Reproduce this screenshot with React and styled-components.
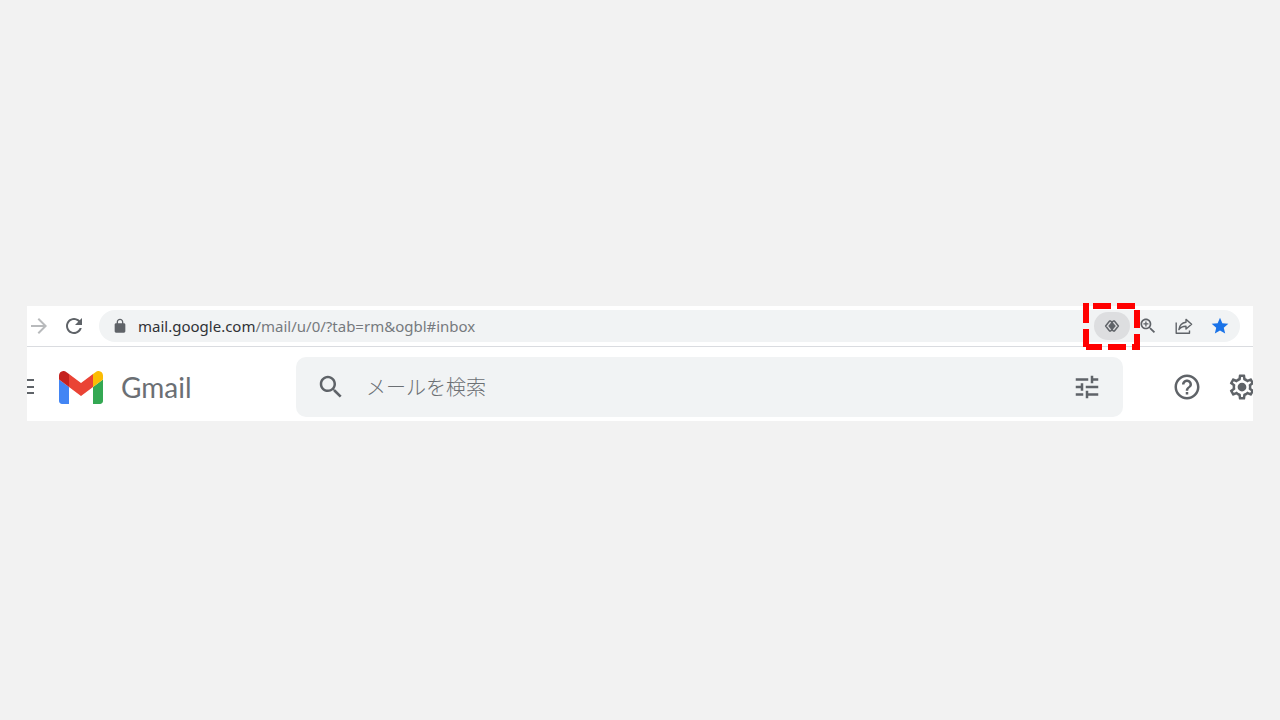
import React from 'react';
import styled, { createGlobalStyle } from 'styled-components';

const GlobalStyle = createGlobalStyle`
  * {
    box-sizing: border-box;
  }

  body {
    margin: 0;
    background: #f2f2f2;
    font-family: 'Noto Sans', 'Noto Sans CJK JP', sans-serif;
  }
`;

const Page = styled.main`
  display: flex;
  flex-direction: column;
  justify-content: center;
  min-height: 100vh;
  padding: 7px 27px 0;
`;

const Window = styled.section`
  background: #fff;
`;

const Toolbar = styled.header`
  display: flex;
  align-items: center;
  height: 41px;
  padding: 0 13px 0 2px;
  border-bottom: 1px solid #dadce0;
`;

const IconButton = styled.button`
  display: flex;
  flex: none;
  align-items: center;
  justify-content: center;
  width: ${props => props.$width || 36}px;
  height: 28px;
  padding: 0;
  border: 0;
  border-radius: 14px;
  background: ${props => (props.$active ? '#dddee0' : 'transparent')};
  color: ${props => props.$color || '#5f6368'};
`;

const Icon = styled.svg`
  display: block;
  flex: none;
  width: ${props => props.$size}px;
  height: ${props => props.$size}px;
  fill: currentColor;
`;

const AddressBar = styled.div`
  display: flex;
  flex: 1;
  align-items: center;
  min-width: 0;
  height: 32px;
  padding: 0 2px 0 13px;
  border-radius: 16px;
  background: #f1f3f4;
  color: #5f6368;
`;

const Url = styled.div`
  flex: 1;
  min-width: 0;
  margin-left: 10px;
  overflow: hidden;
  color: #767a7e;
  font-size: 15px;
  line-height: 24px;
  white-space: nowrap;
  outline: none;
`;

const Host = styled.span`
  color: #303236;
`;

const Highlighted = styled.div`
  position: relative;
`;

const DashedFrame = styled.svg`
  position: absolute;
  top: -9px;
  left: -11px;
  width: 57px;
  height: 47px;
  fill: none;
  stroke: #ff0000;
  stroke-width: 6;
  pointer-events: none;
`;

const AppBar = styled.div`
  display: flex;
  align-items: center;
  height: 74px;
  padding-top: 6px;
  overflow: hidden;
`;

const MenuButton = styled(IconButton)`
  justify-content: flex-end;
`;

const Brand = styled.a`
  display: flex;
  flex: none;
  align-items: center;
  width: 237px;
  margin-left: 25px;
  gap: 18px;
  color: #6b6f74;
  font-family: Lato, sans-serif;
  font-size: 28px;
  line-height: 36px;
  text-decoration: none;
`;

const Logo = styled.svg`
  display: block;
  width: 44px;
  height: 33px;
`;

const Search = styled.form`
  display: flex;
  flex: 1;
  align-items: center;
  min-width: 0;
  height: 60px;
  padding: 0 18px;
  border-radius: 10px;
  background: #f1f3f4;
`;

const SearchInput = styled.input`
  flex: 1;
  min-width: 0;
  margin-left: 18px;
  padding: 0;
  border: 0;
  outline: none;
  background: transparent;
  color: #5f6368;
  font-family: 'Noto Sans CJK JP', sans-serif;
  font-size: 20px;
  font-weight: 300;
  line-height: 30px;

  &::placeholder {
    color: #6b6f73;
    opacity: 1;
  }
`;

const Actions = styled.div`
  display: flex;
  flex: none;
  width: 130px;
  padding-left: 49px;
  gap: 24px;
  overflow: hidden;
`;

const icons = {
  forward: 'M12 4l-1.41 1.41L16.17 11H4v2h12.17l-5.58 5.59L12 20l8-8z',
  reload:
    'M17.65 6.35C16.2 4.9 14.21 4 12 4c-4.42 0-7.99 3.58-7.99 8s3.57 8 7.99 8c3.73 0 6.84-2.55 7.73-6h-2.08c-.82 2.33-3.04 4-5.65 4-3.31 0-6-2.69-6-6s2.69-6 6-6c1.66 0 3.14.69 4.22 1.78L13 11h7V4l-2.35 2.35z',
  lock:
    'M18 8h-1V6c0-2.76-2.24-5-5-5S7 3.24 7 6v2H6c-1.1 0-2 .9-2 2v10c0 1.1.9 2 2 2h12c1.1 0 2-.9 2-2V10c0-1.1-.9-2-2-2zM9 6c0-1.66 1.34-3 3-3s3 1.34 3 3v2H9V6z',
  star:
    'M12 17.27L18.18 21l-1.64-7.03L22 9.24l-7.19-.61L12 2 9.19 8.63 2 9.24l5.46 4.73L5.82 21z',
  search:
    'M15.5 14h-.79l-.28-.27C15.41 12.59 16 11.11 16 9.5 16 5.91 13.09 3 9.5 3S3 5.91 3 9.5 5.91 16 9.5 16c1.61 0 3.09-.59 4.23-1.57l.27.28v.79l5 4.99L20.49 19l-4.99-5zm-6 0C7.01 14 5 11.99 5 9.5S7.01 5 9.5 5 14 7.01 14 9.5 11.99 14 9.5 14z',
  zoom:
    'M15.5 14h-.79l-.28-.27C15.41 12.59 16 11.11 16 9.5 16 5.91 13.09 3 9.5 3S3 5.91 3 9.5 5.91 16 9.5 16c1.61 0 3.09-.59 4.23-1.57l.27.28v.79l5 4.99L20.49 19l-4.99-5zm-6 0C7.01 14 5 11.99 5 9.5S7.01 5 9.5 5 14 7.01 14 9.5 11.99 14 9.5 14zM8.7 6.5h1.6v2.2h2.2v1.6h-2.2v2.2H8.7v-2.2H6.5V8.7h2.2z',
  tune:
    'M3 17v2h6v-2H3zM3 5v2h10V5H3zm10 16v-2h8v-2h-8v-2h-2v6h2zM7 9v2H3v2h4v2h2V9H7zm14 4v-2H11v2h10zm-6-4h2V7h4V5h-4V3h-2v6z',
  help:
    'M11 18h2v-2h-2v2zm1-16C6.48 2 2 6.48 2 12s4.48 10 10 10 10-4.48 10-10S17.52 2 12 2zm0 18c-4.41 0-8-3.59-8-8s3.59-8 8-8 8 3.59 8 8-3.59 8-8 8zm0-14c-2.21 0-4 1.79-4 4h2c0-1.1.9-2 2-2s2 .9 2 2c0 2-3 1.75-3 5h2c0-2.25 3-2.5 3-5 0-2.21-1.79-4-4-4z',
  gear:
    'M19.43 12.98c.04-.32.07-.64.07-.98 0-.34-.03-.66-.07-.98l2.11-1.65c.19-.15.24-.42.12-.64l-2-3.46c-.09-.16-.26-.25-.44-.25-.06 0-.12.01-.17.03l-2.49 1c-.52-.4-1.08-.73-1.69-.98l-.38-2.65C14.46 2.18 14.25 2 14 2h-4c-.25 0-.46.18-.49.42l-.38 2.65c-.61.25-1.17.59-1.69.98l-2.49-1c-.06-.02-.12-.03-.18-.03-.17 0-.34.09-.43.25l-2 3.46c-.13.22-.07.49.12.64l2.11 1.65c-.04.32-.07.65-.07.98 0 .33.03.66.07.98l-2.11 1.65c-.19.15-.24.42-.12.64l2 3.46c.09.16.26.25.44.25.06 0 .12-.01.17-.03l2.49-1c.52.4 1.08.73 1.69.98l.38 2.65c.03.24.24.42.49.42h4c.25 0 .46-.18.49-.42l.38-2.65c.61-.25 1.17-.59 1.69-.98l2.49 1c.06.02.12.03.18.03.17 0 .34-.09.43-.25l2-3.46c.12-.22.07-.49-.12-.64l-2.11-1.65zm-1.98-1.71c.04.31.05.52.05.73 0 .21-.02.43-.05.73l-.14 1.13.89.7 1.08.84-.7 1.21-1.27-.51-1.04-.42-.9.68c-.43.32-.84.56-1.25.73l-1.06.43-.16 1.13-.2 1.35h-1.4l-.19-1.35-.16-1.13-1.06-.43c-.43-.18-.83-.41-1.23-.71l-.91-.7-1.06.43-1.27.51-.7-1.21 1.08-.84.89-.7-.14-1.13c-.03-.31-.05-.54-.05-.74s.02-.43.05-.73l.14-1.13-.89-.7-1.08-.84.7-1.21 1.27.51 1.04.42.9-.68c.43-.32.84-.56 1.25-.73l1.06-.43.16-1.13.2-1.35h1.39l.19 1.35.16 1.13 1.06.43c.43.18.83.41 1.23.71l.91.7 1.06-.43 1.27-.51.7 1.21-1.07.85-.89.7.14 1.13z',
};

const Glyph = ({ name, size, children }) => (
  <Icon $size={size} viewBox="0 0 24 24" aria-hidden="true">
    <path d={icons[name]} />
    {children}
  </Icon>
);

const HandlerIcon = () => (
  <Icon $size={16} viewBox="0 0 16 16" aria-hidden="true">
    <path
      d="M6.6 3H5.6L1.6 8l4 5h1L8 11.6 9.400 13h1l4-5-4-5h-1L8 4.400z"
      fill="none"
      stroke="currentColor"
      strokeWidth="1.5"
      strokeLinejoin="round"
    />
    <path d="M8 3.600L11.800 8 8 12.400 4.200 8z" />
  </Icon>
);

const ShareIcon = () => (
  <Icon $size={20} viewBox="0 0 20 20" aria-hidden="true">
    <path
      d="M2.2 6.5V17.2H15.5V14.5M12 3.4L17.6 8.2 12 13V10.2C8.6 10.2 6.4 11.3 4.9 13.6 5.4 9.8 7.7 6.7 12 6.2z"
      fill="none"
      stroke="currentColor"
      strokeWidth="1.4"
      strokeLinejoin="round"
    />
  </Icon>
);

const MenuIcon = () => (
  <Icon $size={16} viewBox="0 0 16 16" aria-hidden="true">
    <path d="M0 0h16v2H0zM0 7h16v2H0zM0 13h16v2H0z" />
  </Icon>
);

const GmailLogo = () => (
  <Logo viewBox="52 42 88 66" aria-hidden="true">
    <path fill="#4285f4" d="M58 108h14V74L52 59v43c0 3.32 2.69 6 6 6" />
    <path fill="#34a853" d="M120 108h14c3.32 0 6-2.69 6-6V59l-20 15" />
    <path fill="#fbbc04" d="M120 48v26l20-15v-8c0-7.42-8.47-11.65-14.4-7.2" />
    <path fill="#ea4335" d="M72 74V48l24 18 24-18v26L96 92" />
    <path fill="#c5221f" d="M52 51v8l20 15V48l-5.6-4.2c-5.94-4.45-14.4-.22-14.4 7.2" />
  </Logo>
);

const BrowserToolbar = () => (
  <Toolbar>
    <IconButton $width={20} $color="#b8babc" aria-label="進む">
      <Glyph name="forward" size={24} />
    </IconButton>
    <IconButton $width={50} aria-label="再読み込み">
      <Glyph name="reload" size={24} />
    </IconButton>
    <AddressBar>
      <Glyph name="lock" size={16} />
      <Url role="textbox" aria-label="アドレス" tabIndex={0}>
        <Host>mail.google.com</Host>/mail/u/0/?tab=rm&amp;ogbl#inbox
      </Url>
      <Highlighted>
        <IconButton $active aria-label="サービス ハンドラ">
          <HandlerIcon />
        </IconButton>
        <DashedFrame viewBox="0 0 57 47" aria-hidden="true">
          <path d="M10 3H28M34 3H52M54 7V25M54 31V47M54 44H49M43 44H25M19 44H3M3 44V26M3 20V0M0 3H4" />
        </DashedFrame>
      </Highlighted>
      <IconButton aria-label="ズーム">
        <Glyph name="zoom" size={20} />
      </IconButton>
      <IconButton aria-label="共有">
        <ShareIcon />
      </IconButton>
      <IconButton $color="#1a73e8" aria-label="ブックマーク">
        <Glyph name="star" size={20} />
      </IconButton>
    </AddressBar>
  </Toolbar>
);

const MailHeader = () => (
  <AppBar>
    <MenuButton $width={7} aria-label="メインメニュー">
      <MenuIcon />
    </MenuButton>
    <Brand href="#inbox">
      <GmailLogo />
      Gmail
    </Brand>
    <Search role="search" onSubmit={e => e.preventDefault()}>
      <IconButton $width={34} aria-label="検索">
        <Glyph name="search" size={30} />
      </IconButton>
      <SearchInput
        type="text"
        aria-label="メールを検索"
        placeholder="メールを検索"
      />
      <IconButton aria-label="検索オプションを表示">
        <Glyph name="tune" size={30} />
      </IconButton>
    </Search>
    <Actions>
      <IconButton $width={30} aria-label="サポート">
        <Glyph name="help" size={30} />
      </IconButton>
      <IconButton $width={32} aria-label="設定">
        <Glyph name="gear" size={30}>
          <circle cx="12" cy="12" r="3.5" />
        </Glyph>
      </IconButton>
    </Actions>
  </AppBar>
);

const App = () => (
  <>
    <GlobalStyle />
    <Page>
      <Window>
        <BrowserToolbar />
        <MailHeader />
      </Window>
    </Page>
  </>
);

export default App;
